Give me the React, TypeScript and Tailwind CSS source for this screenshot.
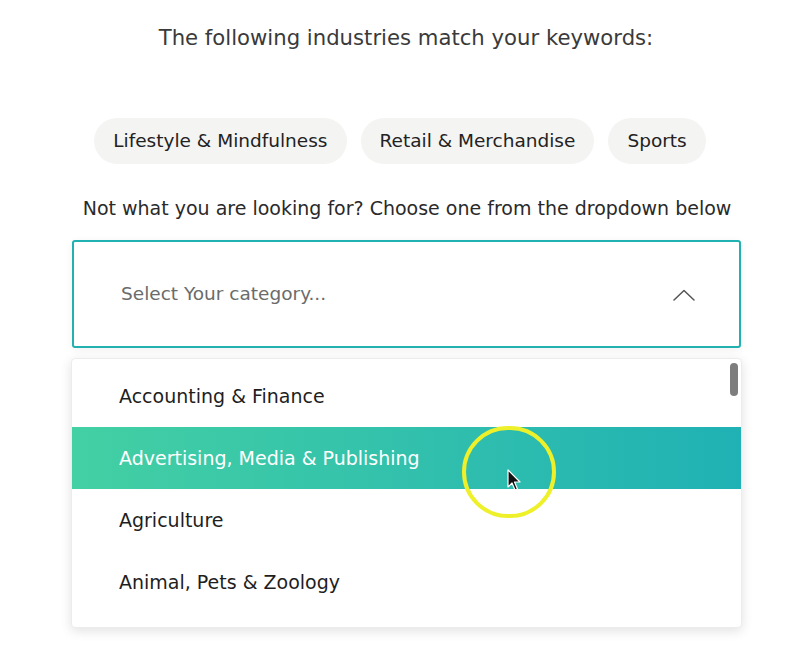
const chips = ["Lifestyle & Mindfulness", "Retail & Merchandise", "Sports"]

const options = [
  "Accounting & Finance",
  "Advertising, Media & Publishing",
  "Agriculture",
  "Animal, Pets & Zoology",
]

export default function App() {
  return (
    <div
      className="w-[796px] h-[659px] bg-white overflow-hidden text-[#333]"
      style={{ fontFamily: '"DejaVu Sans", "Open Sans", sans-serif' }}
    >
      <div className="flex flex-col items-center">
        <h2 className="mt-[24px] ml-[16px] text-[21.2px] leading-[28px] text-[#3a3a3a]">
          The following industries match your keywords:
        </h2>

        {/* matched industries */}
        <div className="mt-[66px] flex gap-[14px] ml-[4px]">
          {chips.map((c) => (
            <span
              key={c}
              className="h-[46px] px-[19px] flex items-center rounded-full bg-[#f4f4f3] text-[18.5px] text-[#222]"
            >
              {c}
            </span>
          ))}
        </div>

        <p className="mt-[30px] ml-[18px] text-[19px] leading-[28px] text-[#2a2a2a]">
          Not what you are looking for? Choose one from the dropdown below
        </p>

        {/* select */}
        <div className="mt-[18px] w-[669px] h-[108px] ml-[17px] border-2 border-[#20b1b0] rounded-[3px] flex items-center justify-between pl-[47px] pr-[44px] shadow-[0_2px_8px_rgba(0,0,0,0.06)]">
          <span className="text-[18.5px] text-[#6b6b6b]">Select Your category...</span>
          <svg width="22" height="12" viewBox="0 0 22 12" className="mt-[1px]">
            <polyline
              points="1,11 11,1.5 21,11"
              fill="none"
              stroke="#555"
              strokeWidth="1.5"
              strokeLinecap="round"
              strokeLinejoin="round"
            />
          </svg>
        </div>

        {/* dropdown menu */}
        <div className="relative mt-[10px] ml-[17px] w-[671px] h-[270px] bg-white rounded-[4px] overflow-hidden shadow-[0_3px_12px_rgba(0,0,0,0.12)] border border-[#ececec]">
          <ul className="pt-[6px]">
            {options.map((o, i) => (
              <li
                key={o}
                className={
                  i === 1
                    ? "h-[62px] flex items-center pl-[47px] text-[19px] text-white bg-gradient-to-r from-[#43d0a3] to-[#1fb1b4]"
                    : "h-[62px] flex items-center pl-[47px] text-[19px] text-[#1e1e1e]"
                }
              >
                {o}
              </li>
            ))}
          </ul>

          {/* scrollbar thumb */}
          <div className="absolute right-[3px] top-[4px] w-[8px] h-[33px] rounded-full bg-[#7d7d7d]" />

          {/* cursor highlight */}
          <div className="absolute left-[390px] top-[67px] w-[94px] h-[92px] rounded-full border-[4px] border-[#eef02a]" />
          <svg
            className="absolute left-[435px] top-[110px]"
            width="16"
            height="24"
            viewBox="0 0 16 24"
          >
            <path
              d="M1 1 L1 18 L5 14 L8 21 L10.5 20 L7.5 13 L13 13 Z"
              fill="#111"
              stroke="#fff"
              strokeWidth="1.2"
              strokeLinejoin="round"
            />
          </svg>
        </div>
      </div>
    </div>
  )
}
